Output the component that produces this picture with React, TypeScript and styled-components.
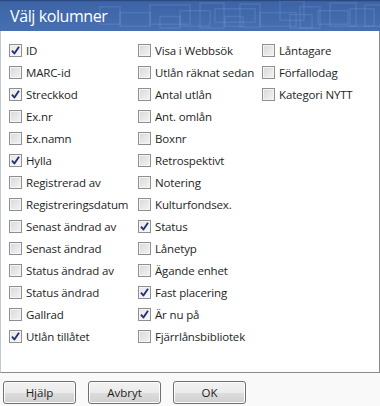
import React from "react";
import styled, { createGlobalStyle } from "styled-components";

const Global = createGlobalStyle`
  html, body { margin: 0; padding: 0; background: #f9f9f9; }
  body { font-family: "Segoe UI", "Open Sans", "Noto Sans", sans-serif; }
  * { box-sizing: border-box; }
`;

const Window = styled.div`
  width: 380px;
  height: 406px;
  display: flex;
  flex-direction: column;
  background: #f9f9f9;
  overflow: hidden;
`;

const TitleBar = styled.div`
  position: relative;
  height: 31px;
  flex: none;
  background: linear-gradient(#34589a 0px, #3d64a6 1px, #4670b0 100%);
  border-top: 1px solid #2b4a80;
  display: flex;
  align-items: center;
  padding-left: 10px;
  overflow: hidden;
`;

const Pattern = styled.svg`
  position: absolute;
  inset: 0;
  width: 100%;
  height: 100%;
  pointer-events: none;
`;

const Title = styled.span`
  position: relative;
  color: #ffffff;
  font-size: 16px;
  letter-spacing: -0.4px;
  margin-top: 0px;
`;

const Panel = styled.div`
  height: 342px;
  flex: none;
  background: #ffffff;
  border: 1px solid #8a8a8a;
  border-top: none;
  border-left-color: #c4c8cf;
  padding: 8px 0 0 8px;
`;

const Grid = styled.div`
  display: grid;
  grid-auto-flow: column;
  grid-template-rows: repeat(14, 22px);
  grid-template-columns: 129px 124px 1fr;
`;

const Item = styled.label`
  display: flex;
  align-items: center;
  gap: 4px;
  font-size: 11.5px;
  letter-spacing: -0.15px;
  color: #1e1e1e;
  white-space: nowrap;
`;

const Box = styled.span<{ $checked: boolean }>`
  width: 13px;
  height: 13px;
  flex: none;
  border: 1px solid #8e8f8f;
  background: ${(p) =>
    p.$checked
      ? "linear-gradient(135deg, #e4e4e4, #fafafa)"
      : "linear-gradient(135deg, #d8d8d8, #f4f4f4)"};
  box-shadow: inset 0 0 0 1px #f4f4f4;
  display: flex;
  align-items: center;
  justify-content: center;
`;

const Footer = styled.div`
  display: flex;
  gap: 12px;
  padding: 8px 0 0 3px;
`;

const Button = styled.button`
  width: 73px;
  height: 23px;
  border: 1px solid #707070;
  border-radius: 3px;
  background: linear-gradient(#f2f2f2 0%, #ebebeb 50%, #dddddd 51%, #cfcfcf 100%);
  box-shadow: inset 0 0 0 1px #fcfcfc;
  font-family: inherit;
  font-size: 11.5px;
  color: #1e1e1e;
  padding: 0;
`;

const Check = () => (
  <svg width="9" height="9" viewBox="0 0 9 9">
    <path d="M1 4.6 L3.4 7.5 L8 0.8" fill="none" stroke="#22317a" strokeWidth="1.9" strokeLinejoin="round" />
  </svg>
);

const cols: [string, boolean][] = [
  ["ID", true],
  ["MARC-id", false],
  ["Streckkod", true],
  ["Ex.nr", false],
  ["Ex.namn", false],
  ["Hylla", true],
  ["Registrerad av", false],
  ["Registreringsdatum", false],
  ["Senast ändrad av", false],
  ["Senast ändrad", false],
  ["Status ändrad av", false],
  ["Status ändrad", false],
  ["Gallrad", false],
  ["Utlån tillåtet", true],
  ["Visa i Webbsök", false],
  ["Utlån räknat sedan", false],
  ["Antal utlån", false],
  ["Ant. omlån", false],
  ["Boxnr", false],
  ["Retrospektivt", false],
  ["Notering", false],
  ["Kulturfondsex.", false],
  ["Status", true],
  ["Lånetyp", false],
  ["Ägande enhet", false],
  ["Fast placering", true],
  ["Är nu på", true],
  ["Fjärrlånsbibliotek", false],
  ["Låntagare", false],
  ["Förfallodag", false],
  ["Kategori NYTT", false],
];

const rects = [
  [150, 4, 40, 20], [180, 10, 30, 16], [200, 2, 24, 26], [215, 8, 40, 14], [240, 3, 20, 24],
  [260, 12, 36, 14], [280, 0, 24, 20], [300, 6, 20, 22], [318, 10, 30, 14], [330, 2, 26, 24],
  [350, 8, 24, 18], [120, 12, 30, 14], [160, 16, 20, 12], [225, 16, 18, 10], [290, 14, 22, 14],
  [365, 4, 20, 22], [100, 6, 20, 18],
];

export default function App() {
  return (
    <Window>
      <Global />
      <TitleBar>
        <Pattern viewBox="0 0 380 31" preserveAspectRatio="none">
          {rects.map(([x, y, w, h], i) => (
            <rect key={i} x={x} y={y} width={w} height={h} fill="none" stroke="#8fb0e0" strokeOpacity={0.2} strokeWidth={1.5} />
          ))}
        </Pattern>
        <Title>Välj kolumner</Title>
      </TitleBar>
      <Panel>
        <Grid>
          {cols.map(([label, checked]) => (
            <Item key={label}>
              <Box $checked={checked}>{checked && <Check />}</Box>
              {label}
            </Item>
          ))}
        </Grid>
      </Panel>
      <Footer>
        <Button>Hjälp</Button>
        <Button>Avbryt</Button>
        <Button>OK</Button>
      </Footer>
    </Window>
  );
}
